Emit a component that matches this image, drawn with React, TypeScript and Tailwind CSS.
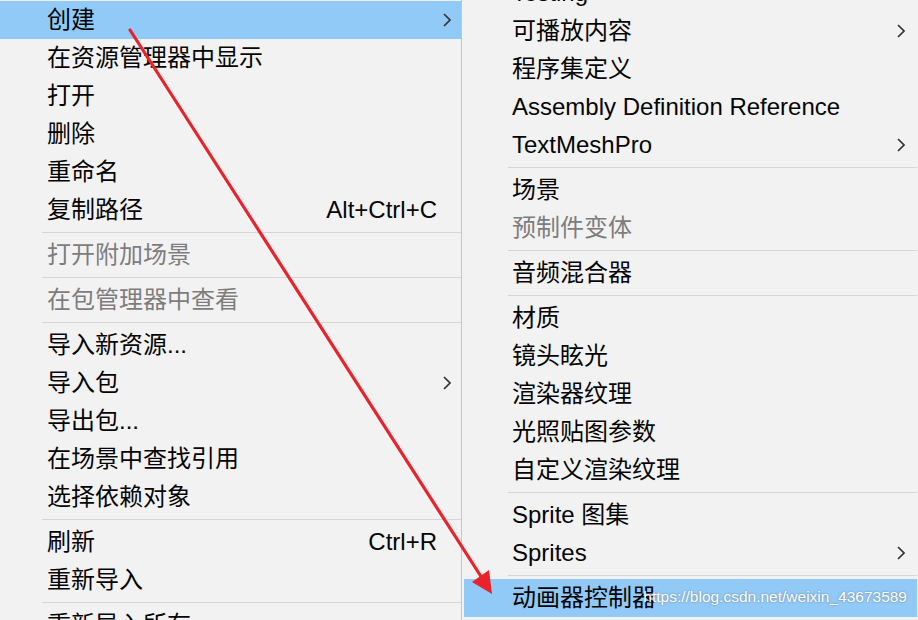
import React from "react";

type Item =
  | { kind: "sep" }
  | { kind: "item"; label: string; shortcut?: string; sub?: boolean; disabled?: boolean; active?: boolean };

const leftItems: Item[] = [
  { kind: "item", label: "创建", sub: true, active: true },
  { kind: "item", label: "在资源管理器中显示" },
  { kind: "item", label: "打开" },
  { kind: "item", label: "删除" },
  { kind: "item", label: "重命名" },
  { kind: "item", label: "复制路径", shortcut: "Alt+Ctrl+C" },
  { kind: "sep" },
  { kind: "item", label: "打开附加场景", disabled: true },
  { kind: "sep" },
  { kind: "item", label: "在包管理器中查看", disabled: true },
  { kind: "sep" },
  { kind: "item", label: "导入新资源..." },
  { kind: "item", label: "导入包", sub: true },
  { kind: "item", label: "导出包..." },
  { kind: "item", label: "在场景中查找引用" },
  { kind: "item", label: "选择依赖对象" },
  { kind: "sep" },
  { kind: "item", label: "刷新", shortcut: "Ctrl+R" },
  { kind: "item", label: "重新导入" },
  { kind: "sep" },
  { kind: "item", label: "重新导入所有" },
];

const rightItems: Item[] = [
  { kind: "item", label: "Testing", sub: true },
  { kind: "item", label: "可播放内容", sub: true },
  { kind: "item", label: "程序集定义" },
  { kind: "item", label: "Assembly Definition Reference" },
  { kind: "item", label: "TextMeshPro", sub: true },
  { kind: "sep" },
  { kind: "item", label: "场景" },
  { kind: "item", label: "预制件变体", disabled: true },
  { kind: "sep" },
  { kind: "item", label: "音频混合器" },
  { kind: "sep" },
  { kind: "item", label: "材质" },
  { kind: "item", label: "镜头眩光" },
  { kind: "item", label: "渲染器纹理" },
  { kind: "item", label: "光照贴图参数" },
  { kind: "item", label: "自定义渲染纹理" },
  { kind: "sep" },
  { kind: "item", label: "Sprite 图集" },
  { kind: "item", label: "Sprites", sub: true },
  { kind: "sep" },
  { kind: "item", label: "动画器控制器", active: true },
];

function Chevron() {
  return (
    <svg width="8" height="14" viewBox="0 0 8 14" className="shrink-0">
      <path d="M1 1 L7 7 L1 13" fill="none" stroke="#333333" strokeWidth="1.7" />
    </svg>
  );
}

function Menu({ items, side }: { items: Item[]; side: "left" | "right" }) {
  return (
    <div className="flex flex-col">
      {items.map((it, i) => {
        if (it.kind === "sep") {
          return (
            <div
              key={i}
              className={
                side === "left"
                  ? "h-[7px] flex items-center pl-[42px]"
                  : "h-[7px] flex items-center pl-[44px]"
              }
            >
              <div className="h-px flex-1 bg-[#d6d6d6]" />
            </div>
          );
        }
        const base =
          side === "left"
            ? "flex items-center h-[38px] pl-[47px] " + (it.shortcut ? "pr-[24px]" : "pr-[10px]")
            : "flex items-center h-[38px] pl-[48px] pr-[12px]";
        return (
          <div
            key={i}
            className={
              base +
              " " +
              (it.active ? "bg-[#91c9f7]" : "") +
              " " +
              (it.disabled ? "text-[#7d7d7d]" : "text-[#050505]")
            }
          >
            <span className="flex-1 whitespace-nowrap">{it.label}</span>
            {it.shortcut && <span className="whitespace-nowrap">{it.shortcut}</span>}
            {it.sub && <Chevron />}
          </div>
        );
      })}
    </div>
  );
}

export default function App() {
  return (
    <div
      className="relative w-[918px] h-[620px] overflow-hidden bg-[#f2f2f2] flex text-[24px] leading-none"
      style={{ fontFamily: '"Liberation Sans", "Noto Sans CJK SC", sans-serif' }}
    >
      <div className="w-[462px] shrink-0 border-r border-[#c6c6c6] pt-px">
        <Menu items={leftItems} side="left" />
      </div>
      <div className="flex-1 pl-[2px] pr-[1px]">
        <div className="-mt-[26px]">
          <Menu items={rightItems} side="right" />
        </div>
      </div>

      <svg
        className="absolute inset-0 pointer-events-none"
        width="918"
        height="620"
        viewBox="0 0 918 620"
      >
        <line x1="130" y1="30" x2="482" y2="578" stroke="#e8232b" strokeWidth="3.2" strokeLinecap="round" />
        <polygon points="492,594 472,582 489,570" fill="#e8232b" />
      </svg>

      <div
        className="absolute right-[11px] top-[589px] text-[15.5px] leading-none text-white whitespace-nowrap"
        style={{ fontFamily: '"Liberation Sans", sans-serif', textShadow: "0 0 2px rgba(80,80,80,0.65)" }}
      >
        https://blog.csdn.net/weixin_43673589
      </div>
    </div>
  );
}
